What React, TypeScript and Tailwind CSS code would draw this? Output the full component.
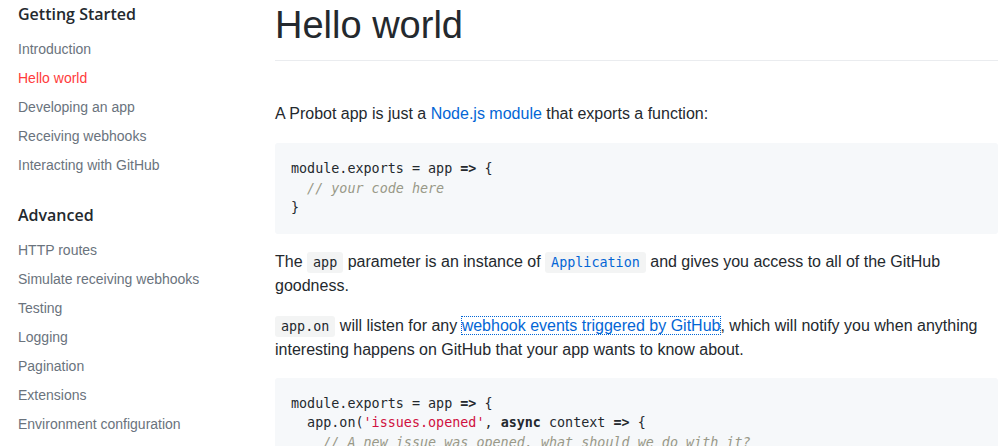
import React from 'react'

const sections = [
  {
    title: 'Getting Started',
    items: ['Introduction', 'Hello world', 'Developing an app', 'Receiving webhooks', 'Interacting with GitHub'],
  },
  {
    title: 'Advanced',
    items: [
      'HTTP routes',
      'Simulate receiving webhooks',
      'Testing',
      'Logging',
      'Pagination',
      'Extensions',
      'Environment configuration',
    ],
  },
]

const mono = "font-['DejaVu_Sans_Mono','Liberation_Mono',monospace]"

function InlineCode({ children, blue }: { children: React.ReactNode; blue?: boolean }) {
  return (
    <code
      className={`${mono} text-[13.4px] leading-none bg-[#f3f4f4] rounded-[3px] px-[6px] py-[3px] ${
        blue ? 'text-[#0366d6]' : 'text-[#24292e]'
      }`}
    >
      {children}
    </code>
  )
}

export default function App() {
  return (
    <div className="h-screen overflow-hidden bg-white text-[#24292e] font-['Liberation_Sans',Arial,sans-serif]">
      <div className="flex">
        {/* Sidebar */}
        <aside className="w-[275px] shrink-0 pl-[18px] pt-[2px]">
          {sections.map((section, i) => (
            <div key={section.title} className={i > 0 ? 'mt-[23px]' : ''}>
              <h3 className="font-['Open_Sans',sans-serif] font-semibold text-[16px] leading-6 text-[#24292e]">
                {section.title}
              </h3>
              <ul className="mt-[9px]">
                {section.items.map((item) => (
                  <li
                    key={item}
                    className={`text-[14px] leading-[29px] ${
                      item === 'Hello world' ? 'text-[#ff3b3b]' : 'text-[#6a737d]'
                    }`}
                  >
                    {item}
                  </li>
                ))}
              </ul>
            </div>
          ))}
        </aside>

        {/* Main Content */}
        <main className="flex-1 pr-[3px] text-[16px] leading-6">
          <h1 className="text-[38px] leading-[48px] font-normal pt-[1px] pb-[11px] border-b border-[#eaecef]">
            Hello world
          </h1>

          <p className="mt-[41px]">
            A Probot app is just a <a className="text-[#0366d6]">Node.js module</a> that exports a function:
          </p>

          <pre className={`${mono} mt-[17px] bg-[#f6f8fa] rounded-[3px] p-4 text-[13.4px] leading-[19.5px]`}>
            <div>
              module.exports = app <b>=&gt;</b> {'{'}
            </div>
            <div className="italic text-[#999988]">{'  // your code here'}</div>
            <div>{'}'}</div>
          </pre>

          <p className="mt-4">
            The <InlineCode>app</InlineCode> parameter is an instance of{' '}
            <InlineCode blue>Application</InlineCode> and gives you access to all of the GitHub goodness.
          </p>

          <p className="mt-4">
            <InlineCode>app.on</InlineCode> will listen for any{' '}
            <a className="text-[#0366d6] outline-1 outline-dotted outline-[#0366d6]">
              webhook events triggered by GitHub
            </a>
            , which will notify you when anything interesting happens on GitHub that your app wants to know about.
          </p>

          <pre className={`${mono} mt-4 bg-[#f6f8fa] rounded-[3px] p-4 text-[13.4px] leading-[19.5px]`}>
            <div>
              module.exports = app <b>=&gt;</b> {'{'}
            </div>
            <div>
              {'  app.on('}
              <span className="text-[#d01040]">'issues.opened'</span>, <b>async</b> context <b>=&gt;</b> {'{'}
            </div>
            <div className="italic text-[#999988]">
              {'    // A new issue was opened, what should we do with it?'}
            </div>
            <div>{'    context.log(context.payload)'}</div>
            <div>{'  })'}</div>
            <div>{'}'}</div>
          </pre>
        </main>
      </div>
    </div>
  )
}
